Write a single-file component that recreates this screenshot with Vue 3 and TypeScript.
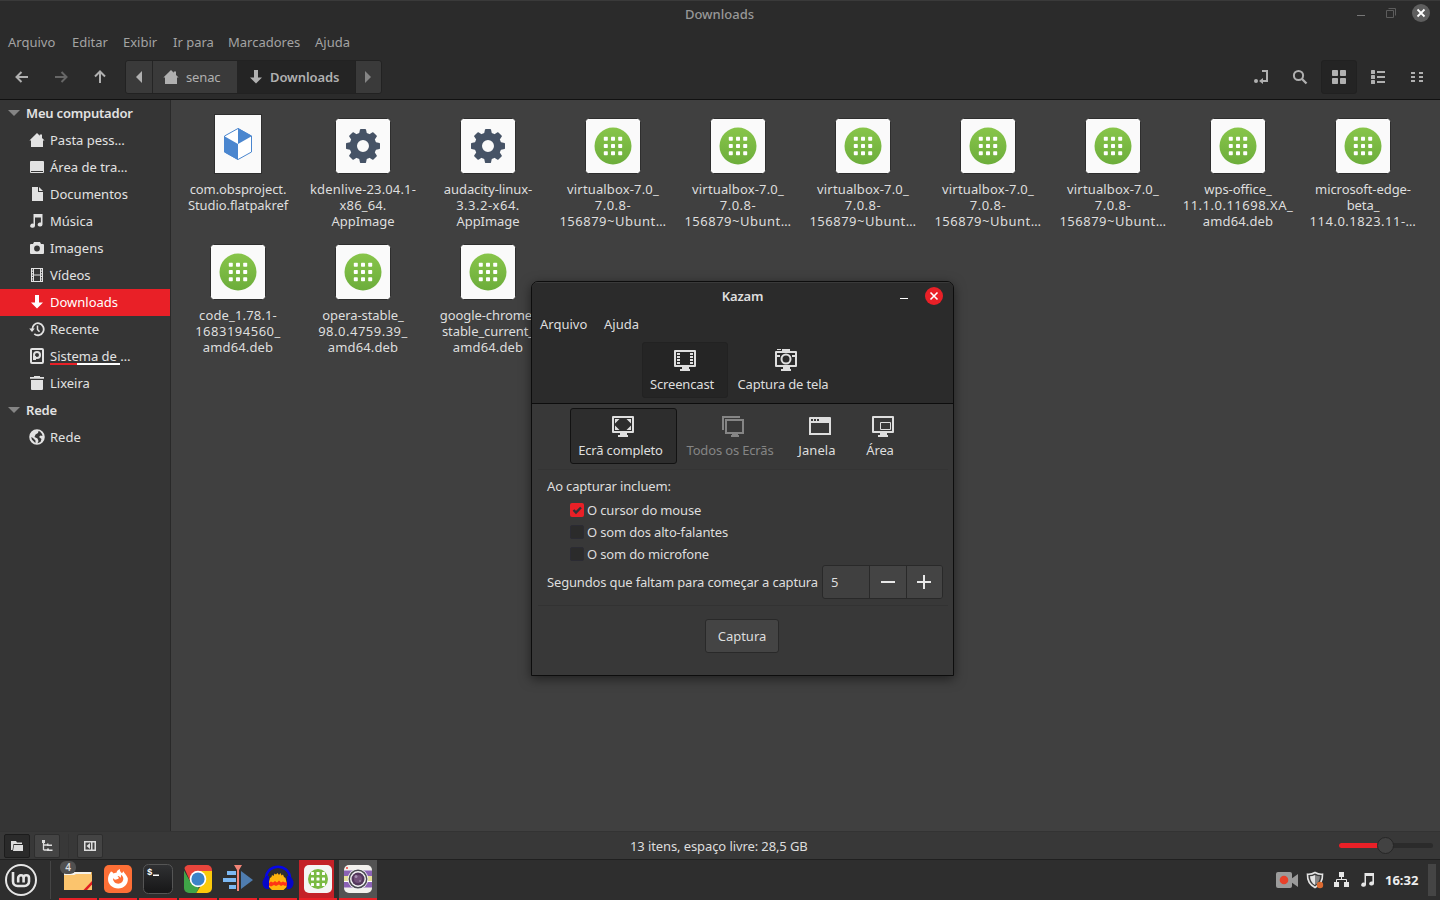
<script setup lang="ts">
interface Entry { kind: 'flatpak' | 'gear' | 'deb'; lines: string[] }
interface Place { icon: string; label: string; active?: boolean; disk?: boolean }
interface Task { icon: string; state?: string; badge?: string }

const icons: Record<string, string> = {
  home: '<path d="M8 1 10.800 3.700V2.600H13v3.300l2.600 2.700H14V15H2V8.600H.4z"/>',
  desktop: '<path fill-rule="evenodd" d="M2 2h12a1 1 0 0 1 1 1v10a1 1 0 0 1-1 1H2a1 1 0 0 1-1-1V3a1 1 0 0 1 1-1zm0 10v1h12v-1z"/>',
  document: '<path d="M3 1h6v5h5v9H3z"/><path d="M10 1l4 4h-4z"/>',
  music: '<path d="M4.500 1h9v10.500a2.400 2 0 1 1-1.600-1.900V4.500H6v8.200a2.400 2 0 1 1-1.500-1.900z"/>',
  camera: '<path fill-rule="evenodd" d="M5 2h6l1 2h2a1 1 0 0 1 1 1v8a1 1 0 0 1-1 1H2a1 1 0 0 1-1-1V5a1 1 0 0 1 1-1h2zM8 5.600a2.900 2.900 0 1 0 0 5.800 2.900 2.900 0 0 0 0-5.800z"/>',
  video: '<path fill-rule="evenodd" d="M2 1h12v14H2zm3 1v5.400h6V2zm0 6.600V14h6V8.600zM3 2.200v1.400h1V2.200zm0 2.600v1.400h1V4.800zm0 2.600v1.400h1V7.400zm0 2.600v1.400h1V10zm0 2.400v1.400h1v-1.400zm9-10.200v1.400h1V2.200zm0 2.600v1.400h1V4.800zm0 2.600v1.400h1V7.400zm0 2.600v1.400h1V10zm0 2.400v1.400h1v-1.400z"/>',
  down: '<path d="M6 1h4v7.500h4L8 14.500 2 8.500h4z"/>',
  recent: '<path d="M3.300 8.500A5.700 6 0 1 1 5.300 12.800" fill="none" stroke="currentColor" stroke-width="1.800"/><path d="M.2 7.600h5.600L3 11z"/><path d="M8.500 4.500V8.500l2 2.200" fill="none" stroke="currentColor" stroke-width="1.500"/>',
  disk: '<rect x="2" y="1" width="12" height="14" rx="1" fill="none" stroke="currentColor" stroke-width="2"/><circle cx="8" cy="7" r="3" fill="none" stroke="currentColor" stroke-width="2"/><path d="M4 8h3v4H4z"/>',
  trash: '<path d="M1 2h4V1h6v1h4v1.800H1zM2 5h12v9a1 1 0 0 1-1 1H3a1 1 0 0 1-1-1z"/>',
  globe: '<path fill-rule="evenodd" d="M8 .2a7.800 7.800 0 1 1 0 15.600A7.800 7.800 0 0 1 8 .2zM2.300 8l.5 2.500 2.700 2.700 1 .8V11.500L4 9zm7.200-6L9 4 6.500 5.500 5.500 8l3 1.500L9.500 12l-1 2.200 3-1.200 1-3-2.500-2 1.500-1.500 2 .5-.5-2-2-2.500z"/>',
  back: '<path d="M14 8H3M7.500 3 2.500 8l5 5" fill="none" stroke="currentColor" stroke-width="2"/>',
  fwd: '<path d="M2 8h11M8.500 3l5 5-5 5" fill="none" stroke="currentColor" stroke-width="2"/>',
  up: '<path d="M8 14V3M3 7.500 8 2.500l5 5" fill="none" stroke="currentColor" stroke-width="2"/>',
  left: '<path d="M11 2v12L5 8z"/>',
  right: '<path d="M5 2v12l6-6z"/>',
  entry: '<path d="M9 2h5v10H9" fill="none" stroke="currentColor" stroke-width="2"/><path d="M10 9v6L6 12z"/><circle cx="3" cy="12" r="2"/>',
  search: '<circle cx="6.500" cy="6.500" r="4.600" fill="none" stroke="currentColor" stroke-width="2"/><path d="m10 10 4.500 4.500" stroke="currentColor" stroke-width="2.300"/>',
  grid: '<rect x="1" y="1" width="6" height="6" rx=".8"/><rect x="9" y="1" width="6" height="6" rx=".8"/><rect x="1" y="9" width="6" height="6" rx=".8"/><rect x="9" y="9" width="6" height="6" rx=".8"/>',
  list: '<rect x="1" y="1" width="4" height="4" rx=".6"/><rect x="1" y="6" width="4" height="4" rx=".6"/><rect x="1" y="11" width="4" height="4" rx=".6"/><path d="M7 2h8v2H7zm0 5h8v2H7zm0 5h8v2H7z"/>',
  compact: '<path d="M2 3h4v2H2zm0 4h4v2H2zm0 4h4v2H2zm8-8h4v2h-4zm0 4h4v2h-4zm0 4h4v2h-4z"/>',
  places: '<path d="M2 3h5l1 1.500h5V6H4.500L3.500 12H2zM5 7h9v6H4z"/>',
  tree: '<rect x="3" y="2" width="3" height="3"/><path d="M4.500 4v8M4.500 7h4M4.500 12h4" fill="none" stroke="currentColor" stroke-width="1.300"/><path d="M8 5.500h1.500v1H13v1.500H8zM8 10.500h2v1h3.500V13H8z"/>',
  hide: '<path fill-rule="evenodd" d="M2 3h12v10H2zm1.500 1.500v7h9v-7z"/><path d="M8 5v6L4.500 8zM9 4h1.500v8H9z"/>'
}

const screen = 'M2 2h20a1 1 0 0 1 1 1v15a1 1 0 0 1-1 1h-6v2h1v2H7v-2h2v-2H2a1 1 0 0 1-1-1V3a1 1 0 0 1 1-1zm1 2v13h18V4z'
const dialogIcons: Record<string, string> = {
  cast: `<path fill-rule="evenodd" d="${screen}"/><path d="M4 5h3v2H4zm0 3h3v2H4zm0 3h3v2H4zm0 3h3v2H4zm13-9h3v2h-3zm0 3h3v2h-3zm0 3h3v2h-3zm0 3h3v2h-3z"/>`,
  shot: '<path fill-rule="evenodd" d="M2 3h6V1h8v2h6a1 1 0 0 1 1 1v14a1 1 0 0 1-1 1h-6v2h1v2H7v-2h2v-2H2a1 1 0 0 1-1-1V4a1 1 0 0 1 1-1zm1 2v12h18V5z"/><path d="M3 1h4v1H3zM3 7h3v2H3zm15 0h3v2h-3z"/><circle cx="12" cy="11" r="4.500" fill="#2b2b2b" stroke="currentColor" stroke-width="2"/>',
  full: `<path fill-rule="evenodd" d="${screen}"/><path d="M4 5h4.500L4 9.500zM20 5h-4.500L20 9.500zM4 16h4.500L4 11.500zM20 16h-4.500l4.500-4.500z"/>`,
  all: '<path d="M2 16V3h17" fill="none" stroke="currentColor" stroke-width="2"/><path fill-rule="evenodd" d="M5 5h18v15h-6v1h1v2h-8v-2h1v-1H4V5zm1 2v11h15V7z"/>',
  window: '<path fill-rule="evenodd" d="M2 3h20a1 1 0 0 1 1 1v17H1V4a1 1 0 0 1 1-1zm1 6v10h18V9zm0-4v2h2V5zm3 0v2h2V5zm3 0v2h2V5z"/>',
  area: `<path fill-rule="evenodd" d="${screen}"/><path d="M9.500 8.500h10v7h-10z" fill="none" stroke="currentColor"/>`
}

const dots = [10.5, 16, 21.5].flatMap(y => [10.5, 16, 21.5].map(x => `<rect x="${x - 1.5}" y="${y - 1.5}" width="3" height="3" rx=".5" fill="#fff"/>`)).join('')

const apps: Record<string, string> = {
  folder: '<path d="M2 9h28v18H2z" fill="#dca653"/><path d="M2 9h27v3H16l-3 2H2z" fill="#f4f1ea"/><path d="M2 12h10l2-1h14l2 1v15H2z" fill="#fbc46d"/><path d="M30 18v3.500l-5 5.500h-3.500z" fill="#e01d23"/>',
  firefox: '<rect x="2" y="2" width="28" height="28" rx="5" fill="#fd6f36"/><path fill-rule="evenodd" d="M9 8.500c1 .2 2 1 2.500 2 1-.7 2-.8 3-.7.3-1.800 1.300-3 3.500-3.800-.5 1.800.4 3 2 4.200l1.500-2c.4 1.700 3.500 4 4.300 7 .7 5.500-3.800 10.300-9.600 10.300-6 0-10.200-4.300-10.200-9.500 0-3 1.200-5.200 3-7.500zM11 15c-.2 3 2 5.700 5.300 5.700 2.900 0 5-2.300 5-4.900 0-1.600-.8-3-2.400-4 .3 1.300.1 2.300-.6 3-.5-1.300-1.500-2-3-1.800 1.300.7 1.700 1.600 1.200 2.800l-2.300.7c-1 .4-2.200 0-3.200-1.500z" fill="#fff"/>',
  term: '<defs><linearGradient id="tg" x2="0" y2="1"><stop stop-color="#303133"/><stop offset="1" stop-color="#161617"/></linearGradient></defs><rect x="1.500" y="1.500" width="29" height="29" rx="5" fill="url(#tg)" stroke="#555"/><text x="5" y="12" font-family="Liberation Mono, monospace" font-size="9" font-weight="bold" fill="#fff">$</text><path d="M11 11.500h6V13h-6z" fill="#fff"/>',
  chrome: '<defs><clipPath id="cc"><rect x="2" y="2" width="28" height="28" rx="5"/></clipPath></defs><g clip-path="url(#cc)"><path d="M0 0h32v11H16L9 20z" fill="#e8453c"/><path d="M0 4l9 16 8 5-4 7H0z" fill="#3fa447"/><path d="M15 8h17v24H13l8-13z" fill="#fcca0b"/></g><circle cx="16" cy="16" r="8.300" fill="#fff"/><circle cx="16" cy="16" r="6.600" fill="#3c83c8"/>',
  kden: '<path d="M5 8h9v4H5zM1 15h13v4H1zM7 22h7v4H7z" fill="#7db9f3"/><path d="M19 8l12 9-12 9z" fill="#4f7caf"/><path d="M12 2h8l-3 5v21h-2V7z" fill="#f28476"/>',
  audacity: '<path d="M4 15C5 0 27 0 28 15" fill="none" stroke="#0707e8" stroke-width="2.500"/><path d="M7 19l1-4 1.500-1 .5-2 1.500 1 1-2.500 1.500 1L15.500 10l1.500 2 1.500-2 1 2.500 1.500-1 1 2.500 1.500 1 1 4v5l-3 3H10l-3-3z" fill="#ffb60d"/><path d="M7 20l2-1.500 2 1 2-1.500 2 1.500 2-2 2 2 2-1 2 1 2-.5v3l-2 1-2-1-2 1-2-1.500-3 1.500-2-1-3 1.500-2-1z" fill="#ff3515"/><path d="M4.500 13H7v13H4Q0 24 .5 18.500 1.500 14.500 4.500 13zM27.500 13H25v13h3q4-2 3.500-7.500-1-4-4-5.500z" fill="#0707c8"/>',
  deb: '<rect x="2" y="2" width="28" height="28" rx="5" fill="#f4f4f4"/><circle cx="16" cy="16" r="10" fill="#7aba42"/>' + dots,
  kazam: '<rect x="2" y="2" width="28" height="28" rx="5" fill="#f2f1ee"/><path d="M2 7.500h28v17H2z" fill="#8b62b5"/><path d="M2 13h28v5H2z" fill="#e6e09b"/><path d="M2 18h28v1H2z" fill="#fff"/><rect x="4" y="4" width="2" height="2" fill="#f06c66"/><circle cx="16" cy="16" r="10.300" fill="#f5f5f5"/><circle cx="16" cy="16" r="8.700" fill="none" stroke="#494950" stroke-width="1.500"/><circle cx="16" cy="16" r="6.500" fill="#54385c"/><circle cx="16" cy="16" r="4" fill="#725079"/><circle cx="14" cy="13.500" r="1.500" fill="#a58daf"/><circle cx="18" cy="18" r="1" fill="#9880a2"/>'
}

const menus = [['Arquivo', 48], ['Editar', 35], ['Exibir', 34], ['Ir para', 39], ['Marcadores', 71], ['Ajuda', 35]] as const

const places: Place[] = [
  { icon: 'home', label: 'Pasta pess…' }, { icon: 'desktop', label: 'Área de tra…' },
  { icon: 'document', label: 'Documentos' }, { icon: 'music', label: 'Música' },
  { icon: 'camera', label: 'Imagens' }, { icon: 'video', label: 'Vídeos' },
  { icon: 'down', label: 'Downloads', active: true }, { icon: 'recent', label: 'Recente' },
  { icon: 'disk', label: 'Sistema de …', disk: true }, { icon: 'trash', label: 'Lixeira' }
]

const vbox: Entry = { kind: 'deb', lines: ['virtualbox-7.0_', '7.0.8-', '156879~Ubunt…'] }
const files: Entry[] = [
  { kind: 'flatpak', lines: ['com.obsproject.', 'Studio.flatpakref'] },
  { kind: 'gear', lines: ['kdenlive-23.04.1-', 'x86_64.', 'AppImage'] },
  { kind: 'gear', lines: ['audacity-linux-', '3.3.2-x64.', 'AppImage'] },
  vbox, vbox, vbox, vbox, vbox,
  { kind: 'deb', lines: ['wps-office_', '11.1.0.11698.XA_', 'amd64.deb'] },
  { kind: 'deb', lines: ['microsoft-edge-', 'beta_', '114.0.1823.11-…'] },
  { kind: 'deb', lines: ['code_1.78.1-', '1683194560_', 'amd64.deb'] },
  { kind: 'deb', lines: ['opera-stable_', '98.0.4759.39_', 'amd64.deb'] },
  { kind: 'deb', lines: ['google-chrome-', 'stable_current_', 'amd64.deb'] }
]
const tracking = (line: string) => {
  if (/^\d/.test(line)) return 'loose'
  return /\d\./.test(line) ? 'mid-track' : ''
}

const sources = [
  { icon: 'full', label: 'Ecrã completo', cls: 'w-full on' },
  { icon: 'all', label: 'Todos os Ecrãs', cls: 'w-all off' },
  { icon: 'window', label: 'Janela', cls: 'w-win' },
  { icon: 'area', label: 'Área', cls: 'w-area' }
]
const checks = [
  { label: 'O cursor do mouse', on: true },
  { label: 'O som dos alto-falantes', on: false },
  { label: 'O som do microfone', on: false }
]
const tasks: Task[] = [
  { icon: 'folder', badge: '4' }, { icon: 'firefox' }, { icon: 'term' }, { icon: 'chrome' },
  { icon: 'kden' }, { icon: 'audacity' }, { icon: 'deb', state: 'alert' }, { icon: 'kazam', state: 'focus' }
]
</script>

<template>
  <div class="desk">
    <header class="head">
      <div class="title">
        <span>Downloads</span>
        <svg class="wm" width="80" height="28" viewBox="0 0 80 28">
          <path d="M2 16.500h8" stroke="#777" />
          <path d="M31.500 11.500h7v7h-7zM33.500 9.500h7v7" fill="none" stroke="#5d5d5d" />
          <circle cx="66" cy="14" r="9" fill="#5e5e5e" />
          <path d="m62.500 10.500 7 7m0-7-7 7" stroke="#fff" stroke-width="1.800" />
        </svg>
      </div>
      <nav class="menu"><span v-for="m in menus" :key="m[0]" :style="{ width: m[1] + 'px' }">{{ m[0] }}</span></nav>
      <div class="tools">
        <svg class="i t1" viewBox="0 0 16 16" v-html="icons.back" />
        <svg class="i t2" viewBox="0 0 16 16" v-html="icons.fwd" />
        <svg class="i t3" viewBox="0 0 16 16" v-html="icons.up" />
        <div class="path">
          <div class="seg s-l"><svg class="i" viewBox="0 0 16 16" v-html="icons.left" /></div>
          <div class="seg s-home"><svg class="i" viewBox="0 0 16 16" v-html="icons.home" /><span>senac</span></div>
          <div class="seg s-dl"><svg class="i" viewBox="0 0 16 16" v-html="icons.down" /><b>Downloads</b></div>
          <div class="seg s-r"><svg class="i" viewBox="0 0 16 16" v-html="icons.right" /></div>
        </div>
        <div class="views">
          <div v-for="v in ['entry', 'search', 'grid', 'list', 'compact']" :key="v" class="view" :class="{ sel: v === 'grid' }">
            <svg class="i" viewBox="0 0 16 16" v-html="icons[v]" />
          </div>
        </div>
      </div>
    </header>

    <main class="mid">
      <aside class="side">
        <div class="row group"><i class="tri" /><b>Meu computador</b></div>
        <div v-for="p in places" :key="p.label" class="row" :class="{ active: p.active }">
          <svg class="i" viewBox="0 0 16 16" v-html="icons[p.icon]" />
          <span :class="{ usage: p.disk }">{{ p.label }}</span>
        </div>
        <div class="row group"><i class="tri" /><b>Rede</b></div>
        <div class="row"><svg class="i" viewBox="0 0 16 16" v-html="icons.globe" /><span>Rede</span></div>
      </aside>
      <section class="files">
        <div v-for="(f, n) in files" :key="n" class="file">
          <div class="thumb">
            <svg v-if="f.kind === 'flatpak'" width="48" height="60" viewBox="0 0 48 60">
              <rect x=".5" y=".5" width="47" height="59" fill="#fafafa" stroke="#2e2e2e" />
              <path d="M24 14.500 37.500 22v16L24 45.500 10.500 38V22z" fill="#fff" stroke="#4a86cf" />
              <path d="M10 22l14 8v16l-14-8zM24 14l14 8-14 8z" fill="#4a86cf" />
            </svg>
            <svg v-else width="56" height="56" viewBox="0 0 56 56">
              <rect x=".5" y=".5" width="55" height="55" rx="3" fill="#fafafa" stroke="#2e2e2e" />
              <g v-if="f.kind === 'gear'" fill="#465366">
                <circle cx="28" cy="28" r="9.700" fill="none" stroke="#465366" stroke-width="7.400" />
                <path v-for="a in 8" :key="a" d="M24 16l1-4.500q.2-.5.800-.5h4.400q.6 0 .8.500l1 4.500z" :transform="`rotate(${a * 45} 28 28)`" />
              </g>
              <g v-else>
                <defs><linearGradient id="green" x2="0" y2="1"><stop stop-color="#88c54a" /><stop offset="1" stop-color="#6cad3b" /></linearGradient></defs>
                <circle cx="28" cy="28" r="18.500" fill="url(#green)" />
                <g fill="#fff">
                  <template v-for="y in 3" :key="y">
                    <rect v-for="x in 3" :key="x" :x="11.6 + x * 7.2" :y="11.6 + y * 7.2" width="4" height="4" rx=".7" />
                  </template>
                </g>
              </g>
            </svg>
          </div>
          <div class="name"><div v-for="l in f.lines" :key="l" :class="tracking(l)">{{ l }}</div></div>
        </div>
      </section>
    </main>

    <footer class="status">
      <div class="sb dark"><svg class="i" viewBox="0 0 16 16" v-html="icons.places" /></div>
      <div class="sb"><svg class="i" viewBox="0 0 16 16" v-html="icons.tree" /></div>
      <i class="vsep" />
      <div class="sb"><svg class="i" viewBox="0 0 16 16" v-html="icons.hide" /></div>
      <span class="info">13 itens, espaço livre: 28,5 GB</span>
      <div class="zoom"><i class="fill" /><i class="knob" /></div>
    </footer>

    <div class="panel">
      <svg class="mint" width="34" height="34" viewBox="0 0 34 34" fill="none" stroke="#e6e6e6">
        <circle cx="17" cy="17" r="15" stroke-width="2" />
        <path d="M9 9v9.500a4.500 4.500 0 0 0 4.500 4.500h7a4.500 4.500 0 0 0 4.500-4.500V15a2.700 2.700 0 0 0-5.400 0v4.500M19.600 15a2.700 2.700 0 0 0-5.400 0v4.500" stroke-width="2.600" />
      </svg>
      <i class="psep" />
      <div v-for="t in tasks" :key="t.icon" class="task" :class="t.state">
        <svg width="32" height="32" viewBox="0 0 32 32" v-html="apps[t.icon]" />
        <span v-if="t.badge" class="badge">{{ t.badge }}</span>
      </div>
      <div class="tray">
        <svg width="104" height="24" viewBox="0 0 104 24">
          <rect x="0" y="4" width="16" height="16" rx="2" fill="#9b9b9b" /><path d="M15 11l7-5v13l-7-5z" fill="#9b9b9b" /><circle cx="8" cy="12" r="4.300" fill="#e8412a" />
          <path d="M39 4.500q4 2.200 7.500 1.700.5 9-7.500 13.300-8-4.300-7.500-13.300Q35 6.700 39 4.500z" fill="#3b3b3b" stroke="#e4e4e4" stroke-width="1.600" />
          <path d="M39 7q2.500 1.300 5 1.300-.2 6-5 8.700z" fill="#858585" /><path d="M39 7q-2.500 1.300-5 1.300.2 6 5 8.700z" fill="#e4e4e4" />
          <circle cx="44" cy="17" r="3.200" fill="#dc6a31" />
          <path d="M63 4h5v5h-5zM58 14h5v5h-5zM68 14h5v5h-5z" fill="#e6e6e6" /><path d="M65.500 9v3M60.500 15v-3.500h10V15" fill="none" stroke="#e6e6e6" />
          <path d="M88.500 5H98v10.500a2.400 2 0 1 1-1.600-1.900V8H90v8.700a2.400 2 0 1 1-1.500-1.900z" fill="#e6e6e6" />
        </svg>
        <b class="clock">16:32</b>
        <i class="show" />
      </div>
    </div>

    <div class="dialog">
      <div class="dhead">
        <div class="dtitle">
          <b>Kazam</b>
          <svg class="dwm" width="50" height="28" viewBox="0 0 50 28">
            <path d="M4 16.500h8" stroke="#fff" /><circle cx="38" cy="14" r="9" fill="#e92027" /><path d="m34.500 10.500 7 7m0-7-7 7" stroke="#fff" stroke-width="1.600" />
          </svg>
        </div>
        <div class="dmenu"><span>Arquivo</span><span>Ajuda</span></div>
        <div class="modes">
          <div class="mode w-cast on"><svg width="24" height="24" viewBox="0 0 24 24" v-html="dialogIcons.cast" /><span>Screencast</span></div>
          <div class="mode w-shot"><svg width="24" height="24" viewBox="0 0 24 24" v-html="dialogIcons.shot" /><span>Captura de tela</span></div>
        </div>
      </div>
      <div class="dbody">
        <div class="sources">
          <div v-for="s in sources" :key="s.icon" class="mode" :class="s.cls">
            <svg width="24" height="24" viewBox="0 0 24 24" v-html="dialogIcons[s.icon]" /><span>{{ s.label }}</span>
          </div>
        </div>
        <div class="opts">
          <div class="lead">Ao capturar incluem:</div>
          <div v-for="c in checks" :key="c.label" class="check">
            <i class="box" :class="{ ticked: c.on }"><svg v-if="c.on" width="14" height="14" viewBox="0 0 14 14"><path d="M3.500 7 6 9.500l5-5" fill="none" stroke="#2f3238" stroke-width="2.400" /></svg></i>
            <span>{{ c.label }}</span>
          </div>
          <div class="delay">
            <span class="dl">Segundos que faltam para começar a captura</span>
            <div class="spin">
              <span class="val">5</span>
              <div class="step"><svg width="16" height="16" viewBox="0 0 16 16"><path d="M1 8h14" stroke="#e8e8e8" stroke-width="2" /></svg></div>
              <div class="step last"><svg width="16" height="16" viewBox="0 0 16 16"><path d="M1 8h14M8 1v14" stroke="#e8e8e8" stroke-width="2" /></svg></div>
            </div>
          </div>
        </div>
        <div class="act"><div class="btn">Captura</div></div>
      </div>
    </div>
  </div>
</template>

<style>
html, body { margin: 0; background: #2e2e2e; overflow: hidden; }
</style>
<style scoped>
* { box-sizing: border-box; }
.desk { position: relative; width: 1440px; height: 900px; display: flex; flex-direction: column; overflow: hidden; font: 13px/16px "Noto Sans", "Open Sans", sans-serif; color: #dedede; white-space: nowrap; background: #404040; }
svg { display: block; flex: none; }
.i { width: 16px; height: 16px; fill: currentColor; }
b { font-weight: 600; }

.head { height: 100px; background: #2b2b2b; border-top: 1px solid #3a3a3a; border-bottom: 1px solid #111; color: #a3a3a3; }
.title { height: 26px; padding-right: 1px; display: flex; align-items: center; justify-content: center; position: relative; font-weight: 500; color: #989898; }
.wm { position: absolute; right: 5px; top: -1px; }
.title .wm { margin-top: -1px; }
.menu { height: 30px; display: flex; align-items: center; gap: 16px; padding-left: 8px; }
.tools { height: 40px; display: flex; align-items: center; padding-left: 14px; color: #b0b0b0; }
.t2 { margin-left: 23px; color: #666; }
.t3 { margin-left: 23px; }
.path { display: flex; width: 257px; height: 34px; margin-left: 17px; border: 1px solid #222; border-radius: 3px; background: #3a3a3a; overflow: hidden; }
.seg { display: flex; align-items: center; }
.s-l { width: 27px; padding-left: 5px; border-right: 1px solid #252525; }
.s-home { width: 84px; padding-left: 10px; gap: 7px; letter-spacing: -.15px; }
.s-dl { width: 118px; padding-left: 11px; gap: 6px; background: #242424; letter-spacing: -.1px; }
.s-r { width: 26px; padding-left: 4px; border-left: 1px solid #222; color: #858585; }
.views { margin-left: auto; margin-right: 5px; display: flex; gap: 3px; }
.view { width: 36px; height: 34px; display: flex; align-items: center; justify-content: center; border-radius: 3px; }
.sel { background: #242424; border: 1px solid #212121; }

.mid { height: 731px; display: flex; }
.side { width: 171px; background: #353535; border-right: 1px solid #292929; color: #e2e2e2; }
.row { height: 27px; padding: 0 0 1px 29px; display: flex; align-items: center; gap: 5px; }
.group { padding-left: 8px; gap: 6px; letter-spacing: -.2px; }
.tri { border: 6px solid transparent; border-top-color: #858585; border-bottom: 0; }
.active { background: #e92027; color: #fff; }
.usage { height: 17px; background: linear-gradient(90deg, #e92027 27px, #fff 27px) 0 100% / 70px 2px no-repeat; }
.files { flex: 1; padding: 10px 0 0 4.500px; display: flex; flex-wrap: wrap; align-content: flex-start; background: #404040; }
.file { width: 125px; height: 126px; display: flex; flex-direction: column; align-items: center; }
.thumb { height: 64px; display: flex; align-items: flex-end; }
.name { margin-top: 7px; text-align: center; letter-spacing: -.08px; }
.name .loose { letter-spacing: .5px; }
.name .mid-track { letter-spacing: .15px; }

.status { height: 29px; display: flex; align-items: center; position: relative; background: #383838; border-top: 1px solid #333; padding-left: 4px; }
.sb { width: 26px; height: 24px; display: flex; align-items: center; justify-content: center; background: #444; border: 1px solid #2e2e2e; border-radius: 2px; margin-right: 4px; }
.dark { background: #2a2a2a; border-color: #1c1c1c; }
.vsep { width: 1px; height: 24px; background: #333; margin: 0 8px 0 4px; }
.info { margin-left: 523px; letter-spacing: -.1px; }
.zoom { position: relative; width: 94px; height: 5px; margin: 0 7px 1px auto; border-radius: 3px; background: #2b2b2b; }
.fill { position: absolute; left: 0; top: 0; width: 40px; height: 5px; border-radius: 3px; background: #e92027; }
.knob { position: absolute; left: 38px; top: -6px; width: 17px; height: 17px; border-radius: 50%; background: #424242; border: 1px solid #262626; }

.panel { height: 40px; display: flex; align-items: flex-start; background: #2e2e2e; box-shadow: 0 -1px #202020; position: relative; }
.mint { margin: 3px 0 0 4px; }
.psep { width: 1px; height: 38px; margin: 1px 8px 0 12px; background: #454545; }
.task { position: relative; width: 38px; height: 40px; margin-right: 2px; padding: 3px 0 0 3px; border-bottom: 2px solid #e92027; }
.alert { background: linear-gradient(90deg, #c42128 35px, transparent 35px); }
.focus { background: #535353; }
.badge { position: absolute; left: 1px; top: 1px; width: 16px; height: 13px; border-radius: 6px; background: #505050; font-size: 10px; line-height: 13px; text-align: center; font-weight: 600; }
.tray { margin-left: auto; margin-right: 4px; display: flex; align-items: center; height: 40px; }
.clock { margin-left: 5px; width: 36px; color: #eee; font-weight: 700; font-size: 13px; }
.show { width: 8px; height: 32px; margin-left: 7px; background: #454545; }

.dialog { position: absolute; left: 531px; top: 281px; width: 423px; height: 395px; border: 1px solid #0d0d0d; border-radius: 7px 7px 0 0; background: #383838; box-shadow: 0 3px 12px rgba(0, 0, 0, .5); overflow: hidden; letter-spacing: -.16px; }
.dhead { height: 122px; background: #2b2b2b; border-top: 1px solid #3a3a3a; border-bottom: 1px solid #0d0d0d; }
.dtitle { height: 26px; display: flex; align-items: center; justify-content: center; position: relative; }
.dwm { position: absolute; right: 7px; top: -1px; }
.dmenu { height: 29px; display: flex; align-items: center; gap: 16px; padding-left: 8px; letter-spacing: 0; }
.dmenu span:first-child { width: 48px; }
.modes { display: flex; padding: 4px 0 0 110px; }
.mode { height: 56px; display: flex; flex-direction: column; align-items: center; gap: 4px; padding-top: 5px; border: 1px solid transparent; border-radius: 3px; flex: none; }
.mode svg { fill: currentColor; }
.w-cast { width: 86px; border-color: #222; background: #252525; }
.w-cast span { margin-left: -6px; }
.w-shot { width: 116px; }
.w-shot span { margin-left: -6px; }
.dbody { height: 272px; }
.sources { height: 66px; margin: 0 5px 0 6px; padding: 4px 0 0 32px; display: flex; border-bottom: 1px solid #343434; }
.w-full { width: 107px; }
.w-full svg { margin-left: -1px; }
.w-full.on { background: #2d2d2d; border-color: #121212; }
.sources .mode span { margin-left: -6px; }
.w-all { width: 112px; color: #858585; }
.w-win { width: 62px; letter-spacing: .1px; }
.w-area { width: 64px; }
.opts { height: 136px; margin: 0 5px 0 6px; padding: 8px 0 0 9px; border-bottom: 1px solid #323232; }
.lead { height: 21px; }
.check { height: 22px; padding-left: 23px; display: flex; align-items: center; gap: 3px; }
.box { width: 14px; height: 14px; border-radius: 2px; background: #2b2b2b; border: 1px solid #2b2b33; }
.ticked { background: #e92027; border: 0; }
.delay { display: flex; align-items: center; height: 34px; }
.dl { width: 275px; flex: none; }
.spin { display: flex; flex: none; width: 121px; height: 34px; border: 1px solid #292929; border-radius: 3px; background: #404040; overflow: hidden; }
.val { width: 46px; flex: none; padding: 8px 0 0 8px; }
.step { width: 37px; flex: none; display: flex; align-items: center; justify-content: center; background: #444; border-left: 1px solid #292929; }
.step.last { width: 36px; padding-right: 1px; }
.act { display: flex; justify-content: center; padding: 13px 0 0 0; }
.btn { width: 74px; height: 34px; margin-right: 1px; display: flex; align-items: center; justify-content: center; background: #444; border: 1px solid #292929; border-radius: 3px; letter-spacing: 0; }
</style>
